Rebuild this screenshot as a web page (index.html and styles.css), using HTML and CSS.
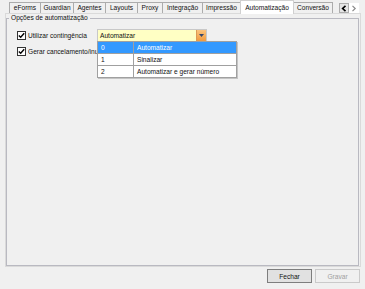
FILE: index.html
```html
<!DOCTYPE html>
<html lang="pt">
<head>
<meta charset="utf-8">
<title>Opções</title>
<link rel="stylesheet" href="styles.css">
</head>
<body>
<div class="window">
  <div class="tabs">
    <div class="tab t-eforms">eForms</div>
    <div class="tab t-guardian">Guardian</div>
    <div class="tab t-agentes">Agentes</div>
    <div class="tab t-layouts">Layouts</div>
    <div class="tab t-proxy">Proxy</div>
    <div class="tab t-integracao">Integração</div>
    <div class="tab t-impressao">Impressão</div>
    <div class="tab t-auto active">Automatização</div>
    <div class="tab t-conversao">Conversão</div>
    <div class="scroll">
      <span class="arrow left"><svg width="6" height="7" viewBox="0 0 6 7"><path d="M4.5 0.8 L1.6 3.5 L4.5 6.2" fill="none" stroke="#000" stroke-width="1.6"/></svg></span>
      <span class="arrow right"><svg width="6" height="7" viewBox="0 0 6 7"><path d="M1.5 0.8 L4.2 3.5 L1.5 6.2" fill="none" stroke="#8a8a8a" stroke-width="1.2"/></svg></span>
    </div>
  </div>
  <div class="panel">
    <fieldset class="group">
      <legend>Opções de automatização</legend>
      <div class="row">
        <label class="check-item">
          <span class="check"><svg width="7" height="7" viewBox="0 0 7 7"><path d="M0.8 3.4 L2.7 5.3 L6.2 1.2" fill="none" stroke="#000" stroke-width="1.4"/></svg></span>
          <span class="check-label">Utilizar contingência</span>
        </label>
        <div class="combo">
          <span class="combo-text">Automatizar</span>
          <span class="combo-btn"><svg width="5" height="3" viewBox="0 0 5 3"><polygon points="0,0 5,0 2.5,3" fill="#34466e"/></svg></span>
          <div class="combo-list">
            <div class="cell sel">0</div><div class="cell sel">Automatizar</div>
            <div class="cell">1</div><div class="cell">Sinalizar</div>
            <div class="cell">2</div><div class="cell">Automatizar e gerar número</div>
          </div>
        </div>
      </div>
      <div class="row">
        <label class="check-item">
          <span class="check"><svg width="7" height="7" viewBox="0 0 7 7"><path d="M0.8 3.4 L2.7 5.3 L6.2 1.2" fill="none" stroke="#000" stroke-width="1.4"/></svg></span>
          <span class="check-label clip">Gerar cancelamento/inutilização</span>
        </label>
      </div>
    </fieldset>
  </div>
  <div class="footer">
    <button class="btn default">Fechar</button>
    <button class="btn disabled" disabled>Gravar</button>
  </div>
</div>
</body>
</html>
```

FILE: styles.css
```css
html, body {
  margin: 0;
  padding: 0;
}
body {
  background: #f0f0f0;
  font-family: "Liberation Sans", Arial, sans-serif;
  font-size: 6.6px;
  color: #111;
  width: 365px;
  height: 289px;
  overflow: hidden;
}
.window {
  display: flex;
  flex-direction: column;
  height: 289px;
}
.tabs {
  display: flex;
  align-items: flex-end;
  height: 13px;
  padding-left: 9px;
}
.tab {
  box-sizing: border-box;
  height: 11px;
  line-height: 10px;
  border: 1px solid #acacac;
  border-bottom: none;
  background: #f0f0f0;
  text-align: center;
  margin-right: -1px;
  white-space: nowrap;
}
.tab.active {
  height: 14px;
  padding-top: 2px;
  margin-bottom: -1px;
  background: #fff;
  border-color: #d0d0d0;
  position: relative;
  z-index: 1;
}
.t-eforms { width: 32px; }
.t-guardian { width: 34px; }
.t-agentes { width: 33px; }
.t-layouts { width: 33px; }
.t-proxy { width: 26px; }
.t-integracao { width: 41px; }
.t-impressao { width: 39px; }
.t-auto { width: 54px; }
.t-conversao { width: 40px; }

.scroll {
  display: flex;
  align-self: flex-start;
  margin-top: 3px;
  margin-left: 7px;
}
.arrow {
  box-sizing: border-box;
  width: 10px;
  height: 10px;
  display: flex;
  align-items: center;
  justify-content: center;
}
.arrow.left {
  border: 1px solid #adadad;
  background: #e5e5e5;
}
.arrow.right {
  background: #fff;
}

.panel {
  box-sizing: border-box;
  margin-left: 5px;
  width: 356px;
  height: 254px;
  border: 1px solid #dadada;
  padding: 0 1px 0 0;
  display: flex;
}
.group {
  flex: 1;
  min-width: 0;
  margin: 0;
  padding: 7px 0 0 10px;
  border: 1px solid #b9b9c1;
}
.group legend {
  margin-left: -8px;
  padding: 0 2px;
  line-height: 8px;
}
.row {
  display: flex;
  align-items: center;
  height: 13px;
}
.row + .row {
  margin-top: 3px;
}
.check-item {
  display: flex;
  align-items: center;
  gap: 2px;
  width: 80px;
  flex: none;
  white-space: nowrap;
  overflow: hidden;
}
.check-label {
  white-space: nowrap;
}
.check-label.clip {
  overflow: hidden;
  flex: 1;
  min-width: 0;
}
.check {
  box-sizing: border-box;
  flex: none;
  width: 9px;
  height: 9px;
  border: 1px solid #333;
  background: #fff;
  display: flex;
  align-items: center;
  justify-content: center;
}
.combo {
  position: relative;
  box-sizing: border-box;
  width: 110px;
  height: 13px;
  border: 1px solid #c8c8c8;
  background: #ffffc4;
  display: flex;
}
.combo-text {
  flex: 1;
  padding-left: 2px;
  line-height: 11px;
}
.combo-btn {
  width: 9px;
  background: linear-gradient(#fbc47e, #f09a3e);
  border-left: 1px solid #dc9a55;
  display: flex;
  align-items: center;
  justify-content: center;
}
.combo-list {
  position: absolute;
  top: 11px;
  left: -1px;
  width: 138px;
  display: grid;
  grid-template-columns: 35px 1fr;
  grid-auto-rows: 11px;
  gap: 1px;
  background: #a0a0a0;
  border: 1px solid #a0a0a0;
  box-shadow: 1px 1px 0 #c4c4c4;
  z-index: 2;
}
.cell {
  background: #fff;
  line-height: 11px;
  padding-left: 3px;
  white-space: nowrap;
}
.cell.sel {
  background: #3399ff;
  color: #fff;
}

.footer {
  display: flex;
  justify-content: flex-end;
  gap: 3px;
  padding: 2px 5px 0 0;
}
.btn {
  box-sizing: border-box;
  width: 45px;
  height: 14px;
  padding: 0;
  font: inherit;
  color: #111;
  background: #e1e1e1;
  border: 1px solid #adadad;
}
.btn.default {
  border-color: #7e7e7e;
}
.btn.disabled {
  background: #f0f0f0;
  border-color: #cacaca;
  color: #a0a0a0;
}
```
